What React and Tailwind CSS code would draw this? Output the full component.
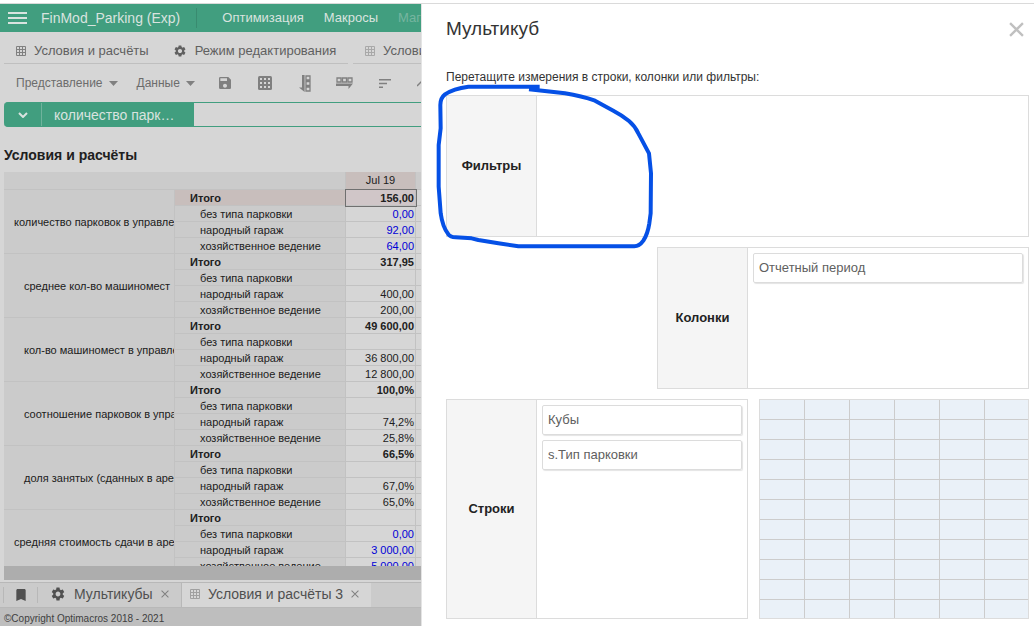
import React from "react";
import { MdSettings, MdSave, MdBookmark } from "react-icons/md";

const groups = [
  { name: "количество парковок в управлении", indent: false, total: "156,00", values: ["0,00", "92,00", "64,00"], input: true },
  { name: "среднее кол-во машиномест", indent: true, total: "317,95", values: ["", "400,00", "200,00"] },
  { name: "кол-во машиномест в управлении", indent: true, total: "49 600,00", values: ["", "36 800,00", "12 800,00"] },
  { name: "соотношение парковок в управлении", indent: true, total: "100,0%", values: ["", "74,2%", "25,8%"] },
  { name: "доля занятых (сданных в аренду)", indent: true, total: "66,5%", values: ["", "67,0%", "65,0%"] },
  { name: "средняя стоимость сдачи в аренду", indent: false, total: "", values: ["0,00", "3 000,00", "5 000,00"], input: true },
];

const kinds = ["без типа парковки", "народный гараж", "хозяйственное ведение"];

function GridIcon({ className }) {
  return (
    <svg viewBox="0 0 10 10" className={className} fill="none" stroke="currentColor" strokeWidth="1" aria-hidden="true">
      <path d="M.5 .5h9v9h-9zM3.5 0v10M6.5 0v10M0 3.5h10M0 6.5h10" />
    </svg>
  );
}

function Caret() {
  return (
    <svg viewBox="0 0 9 5" className="h-[5px] w-[9px]" fill="currentColor" aria-hidden="true">
      <path d="M0 0h9L4.5 5z" />
    </svg>
  );
}

function CrossIcon({ className, width = 1 }) {
  return (
    <svg viewBox="0 0 14 14" className={className} fill="none" stroke="currentColor" strokeWidth={width} aria-hidden="true">
      <path d="M1 1l12 12M13 1L1 13" />
    </svg>
  );
}

function Header() {
  return (
    <header className="flex h-7 shrink-0 items-center bg-[#419e7f] text-sm whitespace-nowrap text-[#d9e3df]">
      <button aria-label="Меню" className="ml-2 shrink-0">
        <svg viewBox="0 0 19 12" className="h-3 w-[19px]" fill="currentColor" aria-hidden="true">
          <path d="M0 0h19v2H0zM0 5h19v2H0zM0 10h19v2H0z" />
        </svg>
      </button>
      <span className="ml-3.5">FinMod_Parking (Exp)</span>
      <span className="ml-4 h-5 w-px shrink-0 bg-[#398b70]" />
      <nav className="ml-[25px] flex gap-5 text-[13px]">
        <a href="#optimization">Оптимизация</a>
        <a href="#macros">Макросы</a>
        <a href="#manager" className="text-[#76b59f]">Магазин</a>
      </nav>
    </header>
  );
}

function TopTabs() {
  return (
    <div className="ml-1 flex h-8 shrink-0 gap-[5px] text-[13px] whitespace-nowrap text-[#606060]">
      <div className="flex w-[344px] shrink-0 items-center border-b border-[#bfbfbf] pt-1.5">
        <button className="ml-3 flex items-center gap-2">
          <GridIcon className="size-2.5 text-[#808080]" />
          Условия и расчёты
        </button>
        <button className="ml-6 flex items-center gap-2">
          <MdSettings className="size-3.5" />
          Режим редактирования
        </button>
      </div>
      <div className="flex w-[344px] shrink-0 items-center border-b border-[#bfbfbf] pt-1.5">
        <button className="ml-3 flex items-center gap-2">
          <GridIcon className="size-2.5 text-[#a8a8a8]" />
          Условия и расчёты
        </button>
      </div>
    </div>
  );
}

function Toolbar() {
  return (
    <div className="flex h-[38px] shrink-0 items-center pl-4 text-xs whitespace-nowrap text-[#808080]">
      <button className="flex items-center gap-1.5">
        <span className="text-[#6c6c6c]">Представление</span>
        <Caret />
      </button>
      <button className="ml-[19px] flex items-center gap-1.5">
        <span className="text-[#6c6c6c]">Данные</span>
        <Caret />
      </button>
      <button aria-label="Сохранить" className="ml-3.5 flex w-8 shrink-0 justify-center">
        <MdSave className="size-4" />
      </button>
      <button aria-label="Таблица" className="ml-2 flex w-8 shrink-0 justify-center">
        <svg viewBox="0 0 14 14" className="size-3.5" aria-hidden="true">
          <rect width="14" height="14" rx="1.5" fill="currentColor" />
          <path
            d="M2 2h2v2H2zM6 2h2v2H6zM10 2h2v2h-2zM2 6h2v2H2zM6 6h2v2H6zM10 6h2v2h-2zM2 10h2v2H2zM6 10h2v2H6zM10 10h2v2h-2z"
            fill="#d6d6d6"
          />
        </svg>
      </button>
      <button aria-label="Строки" className="ml-2 flex w-8 shrink-0 justify-center">
        <svg viewBox="0 0 12 17" className="h-[17px] w-3" fill="none" stroke="currentColor" aria-hidden="true">
          <path d="M7 1h4v4H7zM7 6.5h4v4H7zM7 12h4v4H7z" strokeWidth="1.3" />
          <path d="M3 0h2.6v17L0 12.5h3z" fill="currentColor" stroke="none" />
        </svg>
      </button>
      <button aria-label="Колонки" className="ml-2 flex w-8 shrink-0 justify-center">
        <svg viewBox="0 0 17 12" className="h-3 w-[17px]" fill="none" stroke="currentColor" aria-hidden="true">
          <path d="M1 1h4v4H1zM6.5 1h4v4h-4zM12 1h4v4h-4z" strokeWidth="1.3" />
          <path d="M0 6.4h17L12.5 12V9H0z" fill="currentColor" stroke="none" />
        </svg>
      </button>
      <button aria-label="Сортировка" className="ml-2 flex w-8 shrink-0 justify-center">
        <svg viewBox="0 0 12 9" className="h-[9px] w-3" fill="currentColor" aria-hidden="true">
          <path d="M0 0h12v1.4H0zM0 3.8h8v1.4H0zM0 7.6h4V9H0z" />
        </svg>
      </button>
      <button aria-label="График" className="ml-4 flex w-8 shrink-0">
        <svg viewBox="0 0 14 10" className="h-2.5 w-3.5" fill="none" stroke="currentColor" strokeWidth="1.5" aria-hidden="true">
          <path d="M0 8l5-5 3 3 6-6" />
        </svg>
      </button>
    </div>
  );
}

function FormulaBar() {
  return (
    <div className="ml-1 flex h-[25px] shrink-0 rounded-l-sm border-y border-[#419e7f] bg-[#419e7f] text-sm text-[#d9e3df]">
      <button aria-label="Развернуть" className="flex w-[37px] shrink-0 items-center justify-center">
        <svg viewBox="0 0 10 6" className="h-1.5 w-2.5" fill="none" stroke="currentColor" strokeWidth="2" aria-hidden="true">
          <path d="M1 1l4 4 4-4" />
        </svg>
      </button>
      <span className="flex w-[153px] shrink-0 items-center border-l border-[#6fb39c] pl-3">количество парк…</span>
      <input aria-label="Формула" className="min-w-0 flex-1 bg-[#d6d6d6] outline-none" />
    </div>
  );
}

const line = "border-b border-[#c2c2c2]";

function DataTable() {
  return (
    <table className="w-full table-fixed border-separate border-spacing-0 text-[11px] leading-[13px] whitespace-nowrap text-[#202020]">
      <colgroup>
        <col className="w-[171px]" />
        <col className="w-[171px]" />
        <col className="w-[70px]" />
        <col />
      </colgroup>
      <thead>
        <tr className="h-[18px]">
          <th colSpan={2} className={`${line} border-r bg-[#cbcbcb] p-0`} />
          <th className={`${line} border-r bg-[#c8bebc] p-0 font-normal`}>Jul 19</th>
          <th className={`${line} bg-[#cbcbcb] p-0`} />
        </tr>
      </thead>
      <tbody>
        {groups.map((g, gi) => (
          <React.Fragment key={g.name}>
            {[g.total, ...g.values].map((value, i) => (
              <tr key={i} className="h-4">
                {i === 0 && (
                  <th
                    rowSpan={4}
                    className={`${line} overflow-hidden border-r bg-[#cbcbcb] p-0 pt-0.5 text-left font-normal ${g.indent ? "pl-5" : "pl-2.5"}`}
                  >
                    {g.name}
                  </th>
                )}
                <th
                  className={`${line} border-r p-0 pt-0.5 text-left ${i === 0 ? "pl-[15px] font-bold" : "pl-[25px] font-normal"} ${
                    gi === 0 && i === 0 ? "bg-[#c8bebc]" : "bg-[#cbcbcb]"
                  }`}
                >
                  {i === 0 ? "Итого" : kinds[i - 1]}
                </th>
                <td
                  className={`${line} border-r p-0 pt-0.5 pr-px text-right ${i === 0 ? "font-bold" : ""} ${
                    g.input && i > 0 ? "text-[#0000d6]" : ""
                  } ${gi === 0 && i === 0 ? "relative bg-[#d0c6c8] outline outline-[#707070]" : ""}`}
                >
                  {value}
                </td>
                <td className={`${line} p-0`} />
              </tr>
            ))}
          </React.Fragment>
        ))}
      </tbody>
    </table>
  );
}

function BottomTabs() {
  return (
    <div className="mt-0.5 flex h-[26px] shrink-0 items-center border-y border-[#b8b8b8] bg-[#cbcbcb] text-sm whitespace-nowrap text-[#505050]">
      <button aria-label="Закладки" className="ml-[3px] flex h-4 w-[35px] shrink-0 items-center justify-center border-x border-[#b8b8b8]">
        <MdBookmark className="size-4" />
      </button>
      <div className="flex w-[143px] shrink-0 items-center pb-0.5 pl-3">
        <MdSettings className="size-4 shrink-0" />
        <span className="ml-2">Мультикубы</span>
        <button aria-label="Закрыть Мультикубы" className="ml-2">
          <CrossIcon className="size-2 text-[#808080]" width={1.8} />
        </button>
      </div>
      <div className="flex h-full w-[190px] shrink-0 items-center border-l border-[#b8b8b8] bg-[#d6d6d6] pb-0.5 pl-2">
        <GridIcon className="size-2.5 shrink-0 text-[#a0a0a0]" />
        <span className="ml-2">Условия и расчёты 3</span>
        <button aria-label="Закрыть Условия и расчёты 3" className="ml-2">
          <CrossIcon className="size-2 text-[#808080]" width={1.8} />
        </button>
      </div>
    </div>
  );
}

function Workspace() {
  return (
    <div className="flex w-[421px] shrink-0 flex-col overflow-hidden bg-[#d6d6d6]">
      <Header />
      <TopTabs />
      <Toolbar />
      <FormulaBar />
      <h1 className="mt-[18px] mb-[7px] ml-1 shrink-0 text-sm leading-5 font-bold text-[#202020]">Условия и расчёты</h1>
      <div className="ml-1 min-h-0 flex-1 overflow-hidden">
        <DataTable />
      </div>
      <div className="ml-1 h-3.5 shrink-0 bg-[#adadad]" />
      <BottomTabs />
      <footer className="h-[18px] shrink-0 bg-[#bebebe] pl-1 text-[10px] leading-[22px] text-[#404040]">
        ©Copyright Optimacros 2018 - 2021
      </footer>
    </div>
  );
}

function DropZone({ title, items = [], className }) {
  return (
    <section className={`flex border border-[#dcdcdc] ${className}`}>
      <h3 className="flex w-[90px] shrink-0 items-center justify-center border-r border-[#dcdcdc] bg-[#f5f5f5] text-[13px] font-bold text-[#222222]">
        {title}
      </h3>
      <ul className="flex min-w-0 flex-1 flex-col gap-[5px] p-[5px]">
        {items.map((item) => (
          <li
            key={item}
            draggable
            className="flex h-[30px] items-center rounded-xs border border-[#dcdcdc] px-[5px] text-[13px] text-[#606060] shadow-[1px_1px_1px_#e4e4e4]"
          >
            {item}
          </li>
        ))}
      </ul>
    </section>
  );
}

function PreviewGrid() {
  return (
    <div className="grid min-w-0 flex-1 grid-cols-[repeat(5,45fr)_43fr] grid-rows-[repeat(10,20fr)_18fr] border border-[#dcdcdc]">
      {Array.from({ length: 66 }, (_, i) => (
        <div
          key={i}
          className={`border-[#cccccc] bg-[#eaf1f8] ${i % 6 < 5 ? "border-r" : ""} ${i < 60 ? "border-b" : ""}`}
        />
      ))}
    </div>
  );
}

function BlueMarker() {
  return (
    <svg
      viewBox="0 0 720 780"
      className="pointer-events-none absolute -top-1 left-[3px] h-[260px] w-60"
      fill="none"
      stroke="#0550e6"
      strokeWidth="12"
      strokeLinejoin="round"
      aria-hidden="true"
    >
      <path d="M344 260H130Q85 266 60 283Q46 294 46 315L47 385L41 435V560L47 640Q53 682 70 703Q76 711 92 712L140 715L160 720L220 730L280 739H628Q643 739 655 722Q668 702 673 670L677 640L678 520L672 460L640 400Q630 378 612 363Q590 345 565 332L510 302Q470 288 420 280L312 268" />
    </svg>
  );
}

function Drawer() {
  return (
    <aside className="relative flex min-w-0 flex-1 flex-col border-l border-[#e4e4e4] bg-white pr-[5px] pb-[7px] pl-6">
      <div className="flex h-[50px] shrink-0 items-center justify-between pr-[5px]">
        <h2 className="text-[19px] leading-6 text-[#333333]">Мультикуб</h2>
        <button aria-label="Закрыть">
          <CrossIcon className="size-[15px] text-[#c0c0c0]" width={2.2} />
        </button>
      </div>
      <p className="mt-[15px] mb-[9px] text-xs leading-[17px] text-[#333333]">Перетащите измерения в строки, колонки или фильтры:</p>
      <div className="flex min-h-0 flex-1 flex-col gap-2.5">
        <DropZone title="Фильтры" className="h-[142px] shrink-0" />
        <DropZone title="Колонки" items={["Отчетный период"]} className="ml-[211px] h-[142px] shrink-0" />
        <div className="flex flex-1 gap-[11px]">
          <DropZone title="Строки" items={["Кубы", "s.Тип парковки"]} className="w-[302px] shrink-0" />
          <PreviewGrid />
        </div>
      </div>
      <BlueMarker />
    </aside>
  );
}

export default function App() {
  return (
    <div className="flex h-screen flex-col overflow-hidden bg-white font-['Liberation_Sans',Arial,sans-serif]">
      <div className="mt-[3px] flex min-h-0 flex-1 border-t border-[#dadada]">
        <Workspace />
        <Drawer />
      </div>
    </div>
  );
}
